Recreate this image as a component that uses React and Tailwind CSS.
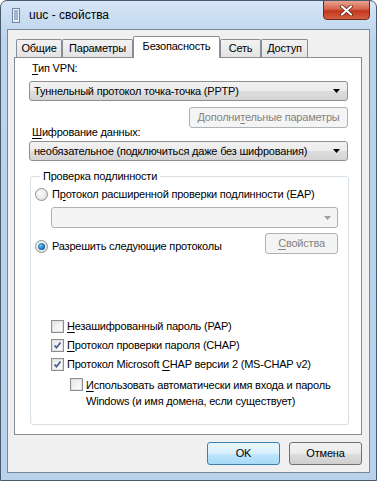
import React from "react";

const FONT = { fontFamily: '"Liberation Sans", Arial, sans-serif' };

// буква с подчёркиванием (клавиша доступа)
const U = ({ children }) => <span className="underline underline-offset-2">{children}</span>;

function Arrow({ disabled }) {
  return (
    <svg width="7" height="4" viewBox="0 0 7 4" className="shrink-0">
      <path d="M0 0h7L3.5 4z" fill={disabled ? "#a0a0a0" : "#000"} />
    </svg>
  );
}

function Combo({ text, disabled, className }) {
  return (
    <div
      className={
        disabled
          ? `flex h-[21px] items-center rounded-[3px] border border-[#adb2b5] bg-[#f4f4f4] pl-[4px] pr-[6px] ${className}`
          : `flex h-[20px] items-center rounded-[3px] border border-[#8e8f8f] bg-[linear-gradient(to_bottom,#f2f2f2_0%,#ebebeb_50%,#dddddd_51%,#d4d4d4_100%)] pl-[4px] pr-[7px] ${className}`
      }
    >
      <span className="flex-1 truncate">{text}</span>
      <Arrow disabled={disabled} />
    </div>
  );
}

function Radio({ checked }) {
  return (
    <div className="flex h-[13px] w-[13px] shrink-0 items-center justify-center rounded-full border border-[#8e8f8f] bg-[radial-gradient(circle_at_40%_40%,#ffffff,#d6d6d6)]">
      {checked && (
        <div className="h-[7px] w-[7px] rounded-full bg-[radial-gradient(circle_at_40%_40%,#6fc8f5,#0d5aa7_70%,#1c3f6e)]" />
      )}
    </div>
  );
}

function Check({ checked }) {
  return (
    <div className="flex h-[13px] w-[13px] shrink-0 items-center justify-center border border-[#8e8f8f] bg-white">
      <div className="flex h-[11px] w-[11px] items-center justify-center border border-[#e0e0e0] bg-[linear-gradient(135deg,#e6e6e6,#ffffff)]">
        {checked && (
          <svg width="9" height="9" viewBox="0 0 9 9">
            <path d="M1.5 4.5l2 2.2L7.5 1.5" fill="none" stroke="#4a5f97" strokeWidth="1.8" />
          </svg>
        )}
      </div>
    </div>
  );
}

function Tab({ label, selected, w }) {
  if (selected) {
    return (
      <div className={`relative z-10 -mb-px flex h-[22px] items-center justify-center rounded-t-[2px] border border-b-0 border-[#898c95] bg-white pb-[2px] ${w}`}>
        {label}
      </div>
    );
  }
  return (
    <div className={`flex h-[18px] items-center justify-center rounded-t-[2px] border border-b-0 border-[#898c95] bg-[linear-gradient(to_bottom,#f2f2f2,#e3e3e3)] ${w}`}>
      {label}
    </div>
  );
}

export default function App() {
  return (
    <div
      style={FONT}
      className="flex h-[481px] w-[377px] flex-col overflow-hidden whitespace-nowrap rounded-t-[7px] border border-[#4a5a6e] bg-[linear-gradient(to_bottom,#d5e5f6,#bcd3ec_40px,#b9d1ea)] text-[11px] leading-[15px] tracking-[-0.2px] text-black"
    >
      {/* заголовок окна */}
      <div className="flex h-[28px] shrink-0 items-start">
        <svg width="8" height="15" viewBox="0 0 8 15" className="ml-[11px] mt-[7px]">
          <rect x="0.5" y="0.5" width="7" height="14" fill="#e8eef6" stroke="#6f86a6" />
          <path d="M2 3h4M2 5h4M2 7h4M2 9h4M2 11h4" stroke="#5b7aa6" />
        </svg>
        <span className="ml-[9px] mt-[7px] text-[12px] tracking-normal">uuc - свойства</span>
        <div className="flex-1" />
        <div className="-mt-px mr-[6px] flex h-[20px] w-[47px] items-center justify-center rounded-b-[4px] border border-[#6b2a1f] bg-[linear-gradient(to_bottom,#e8a290,#d4644c_45%,#c3371e_55%,#d45f3f)]">
          <svg width="13" height="11" viewBox="0 0 13 11">
            <path d="M2 1.5l9 8M11 1.5l-9 8" stroke="#5a1f14" strokeWidth="3.6" strokeLinecap="round" />
            <path d="M2 1.5l9 8M11 1.5l-9 8" stroke="#ffffff" strokeWidth="2.2" strokeLinecap="round" />
          </svg>
        </div>
      </div>

      {/* клиентская область */}
      <div className="mx-[6px] mb-[7px] flex flex-1 flex-col border border-[#7a8798] bg-[#f0f0f0] pl-[6px] pr-[7px] pt-[6px]">
        {/* вкладки */}
        <div className="flex items-end pl-[2px]">
          <Tab label="Общие" w="w-[46px]" />
          <Tab label="Параметры" w="w-[71px]" />
          <Tab label="Безопасность" selected w="w-[87px]" />
          <Tab label="Сеть" w="w-[41px]" />
          <Tab label="Доступ" w="w-[47px]" />
        </div>

        {/* панель вкладки */}
        <div className="flex h-[378px] flex-col border border-[#898c95] bg-white pl-[14px] pr-[13px] pt-[3px]">
          <div className="ml-[3px]">
            <U>Т</U>ип VPN:
          </div>
          <Combo className="mt-[5px]" text="Туннельный протокол точка-точка (PPTP)" />
          <div className="mt-[6px] flex justify-end">
            <div className="flex h-[21px] w-[159px] items-center justify-center rounded-[3px] border border-[#adb2b5] bg-[#f4f4f4] text-[#838383]">
              Дополни<U>т</U>ельные параметры
            </div>
          </div>
          <div className="-mt-[3px] ml-[3px]">
            <U>Ш</U>ифрование данных:
          </div>
          <Combo className="mt-[1px]" text="необязательное (подключиться даже без шифрования)" />

          {/* группа проверки подлинности */}
          <fieldset className="mt-[8px] mr-[-1px] ml-[1px] rounded-[3px] border border-[#d5dfe5] pb-[15px] pl-[4px] pr-[10px] pt-[2px]">
            <legend className="ml-[5px] px-[3px]">Проверка подлинности</legend>
            <div className="flex h-[16px] items-center gap-[4px]">
              <Radio />
              <span>
                П<U>р</U>отокол расширенной проверки подлинности (EAP)
              </span>
            </div>
            <Combo disabled className="ml-[16px] mt-[5px]" text="" />
            <div className="mt-[5px] flex items-start">
              <div className="mt-[5px] flex h-[16px] flex-1 items-center gap-[4px]">
                <Radio checked />
                <span>
                  Разрешить сле<U>д</U>ующие протоколы
                </span>
              </div>
              <div className="flex h-[21px] w-[73px] items-center justify-center rounded-[3px] border border-[#adb2b5] bg-[#f4f4f4] text-[#838383]">
                <U>С</U>войства
              </div>
            </div>

            <div className="ml-[16px] mt-[64px] flex flex-col gap-[3px]">
              <div className="flex h-[16px] items-center gap-[3px]">
                <Check />
                <span>
                  <U>Н</U>езашифрованный пароль (PAP)
                </span>
              </div>
              <div className="flex h-[16px] items-center gap-[3px]">
                <Check checked />
                <span>
                  <U>П</U>ротокол проверки пароля (CHAP)
                </span>
              </div>
              <div className="flex h-[16px] items-center gap-[3px]">
                <Check checked />
                <span>
                  Протокол Microsoft <U>C</U>HAP версии 2 (MS-CHAP v2)
                </span>
              </div>
              <div className="ml-[19px] mt-[2px] flex items-start gap-[3px] leading-[16px]">
                <div className="mt-[1px]">
                  <Check />
                </div>
                <span>
                  <U>И</U>спользовать автоматически имя входа и пароль
                  <br />
                  Windows (и имя домена, если существует)
                </span>
              </div>
            </div>
          </fieldset>
        </div>

        {/* кнопки */}
        <div className="mt-[7px] flex justify-end gap-[9px]">
          <div className="flex h-[23px] w-[73px] items-center justify-center rounded-[3px] border border-[#3c7fb1] bg-[linear-gradient(to_bottom,#eaf6fd_0%,#d9f0fc_50%,#bee6fd_51%,#a7d9f5_100%)]">
            OK
          </div>
          <div className="flex h-[23px] w-[73px] items-center justify-center rounded-[3px] border border-[#707070] bg-[linear-gradient(to_bottom,#f2f2f2_0%,#ebebeb_50%,#dddddd_51%,#cfcfcf_100%)]">
            Отмена
          </div>
        </div>
      </div>
    </div>
  );
}
